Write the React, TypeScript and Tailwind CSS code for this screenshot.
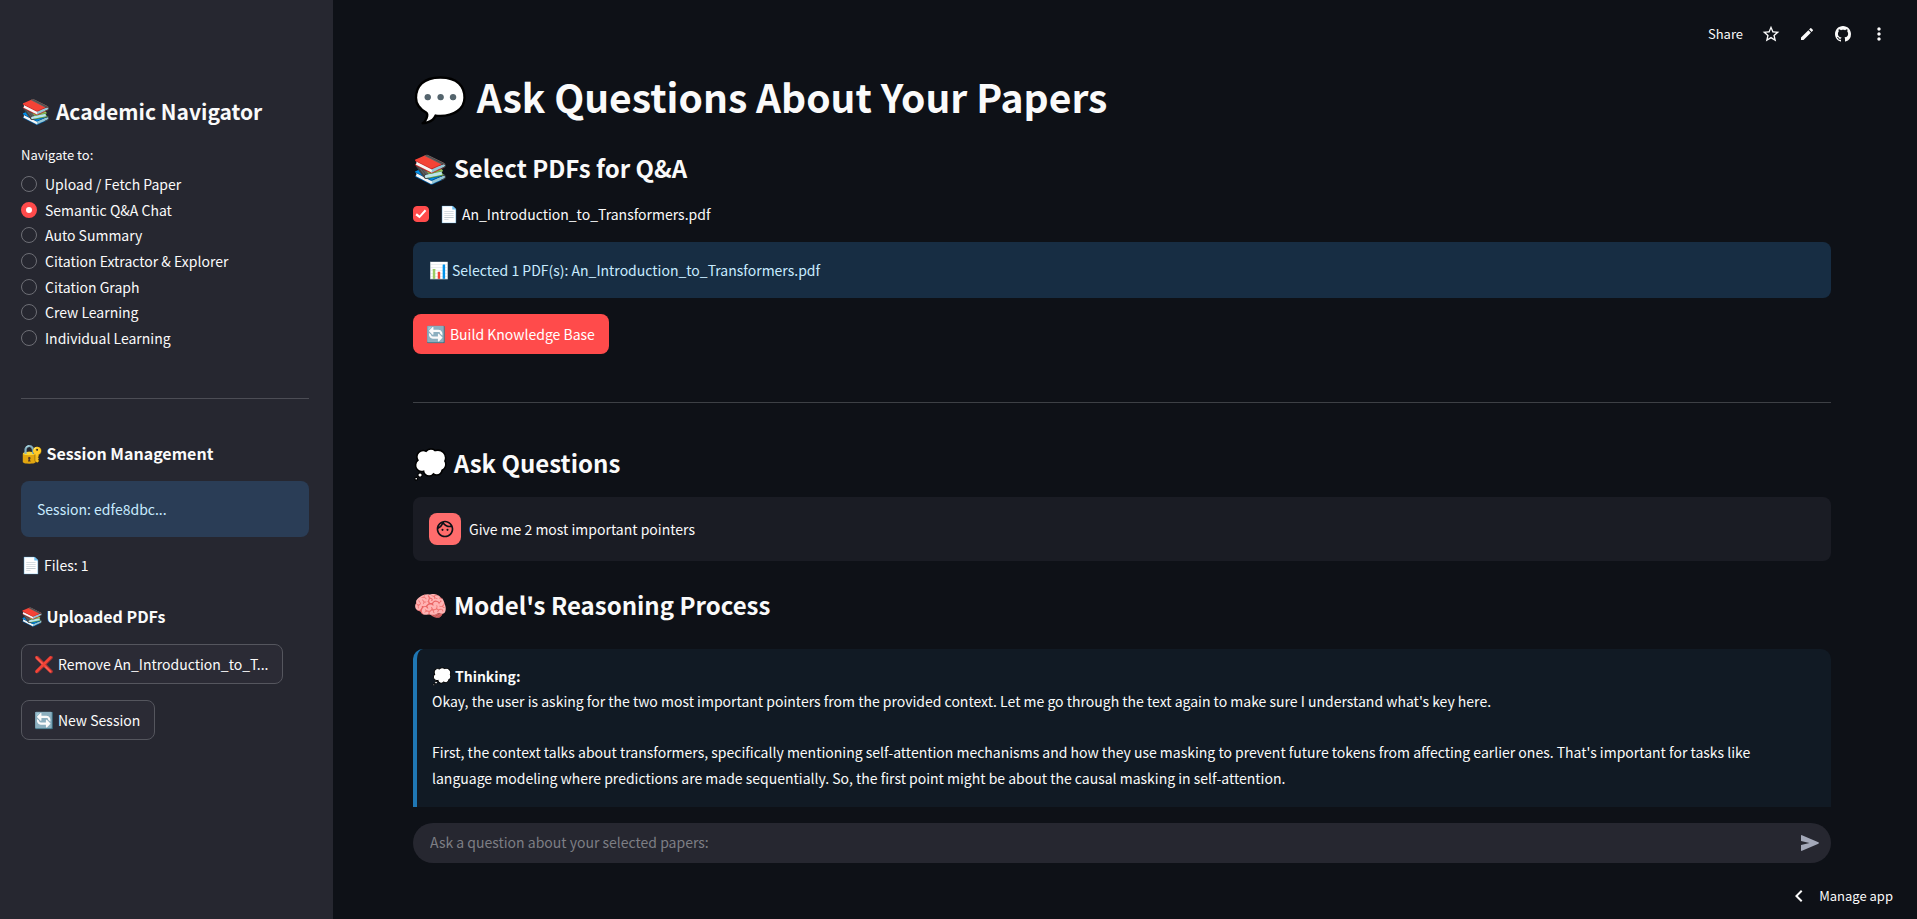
import { useState, type ReactNode } from "react";
import { MdChevronLeft, MdEdit, MdMoreVert, MdOutlineFace, MdStarBorder } from "react-icons/md";

const PAGES = [
  "Upload / Fetch Paper",
  "Semantic Q&A Chat",
  "Auto Summary",
  "Citation Extractor & Explorer",
  "Citation Graph",
  "Crew Learning",
  "Individual Learning",
];

const SECONDARY_BUTTON =
  "flex h-10 items-center gap-1 rounded-lg border border-[#55565e] bg-[#2b2b35] pr-3.5 pl-3";

function Emoji({ children, className = "text-base" }: { children: string; className?: string }) {
  return (
    <span aria-hidden="true" className={`shrink-0 pb-0.5 leading-none ${className}`}>
      {children}
    </span>
  );
}

function SectionHeading({ emoji, children }: { emoji: string; children: ReactNode }) {
  return (
    <h2 className="flex h-9 items-center gap-1.5 text-2xl font-semibold">
      <Emoji className="text-[28px]">{emoji}</Emoji>
      {children}
    </h2>
  );
}

function SidebarHeading({ emoji, children }: { emoji: string; children: ReactNode }) {
  return (
    <h3 className="flex h-6 items-center gap-[3px] text-base font-semibold">
      <Emoji className="text-lg">{emoji}</Emoji>
      {children}
    </h3>
  );
}

function Sidebar() {
  const [page, setPage] = useState(PAGES[1]);
  return (
    <aside className="w-[333px] shrink-0 overflow-hidden bg-[#262730] pt-[95px] pr-6 pl-[21px]">
      <h2 className="flex h-8 items-center gap-[5px] text-[21px] font-semibold">
        <Emoji className="text-2xl">📚</Emoji>
        Academic Navigator
      </h2>
      <fieldset className="mt-4">
        <legend className="h-6 text-[13px] leading-6">Navigate to:</legend>
        <div className="mt-[5px] flex h-[178px] flex-col justify-between">
          {PAGES.map((name) => (
            <label key={name} className="flex h-6 items-center gap-2">
              <input
                type="radio"
                name="page"
                checked={page === name}
                onChange={() => setPage(name)}
                className="size-4 shrink-0 appearance-none rounded-full border border-[#6d6e75] checked:border-[5px] checked:border-[#ff4b4b] checked:bg-white"
              />
              {name}
            </label>
          ))}
        </div>
      </fieldset>
      <hr className="mt-12 border-[#4c4d55]" />
      <div className="mt-[42px]">
        <SidebarHeading emoji="🔐">Session Management</SidebarHeading>
      </div>
      <div className="mt-4 flex h-14 items-center rounded-lg bg-[#2a3d56] px-4 text-[#c7ebff]">
        Session: edfe8dbc...
      </div>
      <p className="mt-4 flex h-6 items-center gap-[3px]">
        <Emoji>📄</Emoji>
        Files: 1
      </p>
      <div className="mt-[27px]">
        <SidebarHeading emoji="📚">Uploaded PDFs</SidebarHeading>
      </div>
      <div className="mt-4 flex flex-col items-start gap-4">
        <button type="button" className={SECONDARY_BUTTON}>
          <Emoji>❌</Emoji>
          Remove An_Introduction_to_T...
        </button>
        <button type="button" className={SECONDARY_BUTTON}>
          <Emoji>🔄</Emoji>
          New Session
        </button>
      </div>
    </aside>
  );
}

function Toolbar() {
  return (
    <header className="flex h-[60px] shrink-0 items-center justify-end gap-4 pt-2 pr-7">
      <button type="button" className="mr-0.5 text-[13px]">
        Share
      </button>
      <button type="button" aria-label="Favorite" className="grid size-5 place-items-center">
        <MdStarBorder className="size-5" />
      </button>
      <button type="button" aria-label="Edit source" className="grid size-5 place-items-center">
        <MdEdit className="size-4" />
      </button>
      <button type="button" aria-label="View on GitHub" className="grid size-5 place-items-center">
        <svg viewBox="0 0 16 16" className="size-4" fill="currentColor">
          <path d="M8 0C3.58 0 0 3.58 0 8c0 3.54 2.29 6.53 5.47 7.59.4.07.55-.17.55-.38 0-.19-.01-.82-.01-1.49-2.01.37-2.53-.49-2.69-.94-.09-.23-.48-.94-.82-1.13-.28-.15-.68-.52-.01-.53.63-.01 1.08.58 1.23.82.72 1.21 1.87.87 2.33.66.07-.52.28-.87.51-1.07-1.78-.2-3.64-.89-3.64-3.95 0-.87.31-1.59.82-2.15-.08-.2-.36-1.02.08-2.12 0 0 .67-.21 2.2.82.64-.18 1.32-.27 2-.27s1.36.09 2 .27c1.53-1.04 2.2-.82 2.2-.82.44 1.1.16 1.92.08 2.12.51.56.82 1.27.82 2.15 0 3.07-1.87 3.75-3.65 3.95.29.25.54.73.54 1.48 0 1.07-.01 1.93-.01 2.2 0 .21.15.46.55.38A8.01 8.01 0 0 0 16 8c0-4.42-3.58-8-8-8Z" />
        </svg>
      </button>
      <button type="button" aria-label="Main menu" className="grid size-5 place-items-center">
        <MdMoreVert className="size-5" />
      </button>
    </header>
  );
}

export default function App() {
  const [included, setIncluded] = useState(true);
  return (
    <div className="flex h-screen overflow-hidden bg-[#0e1117] font-['Noto_Sans_CJK_SC','Noto_Color_Emoji',sans-serif] text-sm text-[#fafafa]">
      <Sidebar />
      <div className="flex min-w-0 flex-1 flex-col">
        <Toolbar />
        <main className="min-h-0 flex-1 overflow-hidden pr-[86px] pl-20">
          <h1 className="flex h-[74px] items-center gap-[9px] text-[39px] font-bold">
            <Emoji className="text-[44px]">💬</Emoji>
            Ask Questions About Your Papers
          </h1>
          <div className="mt-4">
            <SectionHeading emoji="📚">Select PDFs for Q&amp;A</SectionHeading>
          </div>
          <label className="mt-4 flex h-6 items-center">
            <span className="mr-2.5 grid size-4 place-items-center">
              <input
                type="checkbox"
                checked={included}
                onChange={() => setIncluded(!included)}
                className="col-start-1 row-start-1 size-4 appearance-none rounded border border-[#6d6e75] checked:border-[#ff4b4b] checked:bg-[#ff4b4b]"
              />
              {included && (
                <svg viewBox="0 0 17 13" className="pointer-events-none col-start-1 row-start-1 h-2.5 w-3" fill="none">
                  <path
                    d="M6.50002 12.6L0.600025 8.40002L2.60002 5.60002L6.50002 8.60002L13.9 0L16 2.40002L6.50002 12.6Z"
                    fill="white"
                  />
                </svg>
              )}
            </span>
            <Emoji className="mr-[3px] text-base">📄</Emoji>
            An_Introduction_to_Transformers.pdf
          </label>
          <div className="mt-4 flex h-14 items-center gap-[3px] rounded-lg bg-[#172d43] px-4 text-[#c7ebff]">
            <Emoji>📊</Emoji>
            Selected 1 PDF(s): An_Introduction_to_Transformers.pdf
          </div>
          <button
            type="button"
            className="mt-4 flex h-10 items-center gap-1 rounded-lg bg-[#ff4b4b] pr-3.5 pl-[13px] text-white"
          >
            <Emoji>🔄</Emoji>
            Build Knowledge Base
          </button>
          <hr className="mt-12 border-[#3d4045]" />
          <div className="mt-[42px]">
            <SectionHeading emoji="💭">Ask Questions</SectionHeading>
          </div>
          <div className="mt-4 flex h-16 items-center gap-2 rounded-lg bg-[#1a1c24] px-4">
            <span className="grid size-8 place-items-center rounded-lg bg-[#ff6c6c] text-[#0e1117]">
              <MdOutlineFace className="size-5" />
            </span>
            Give me 2 most important pointers
          </div>
          <div className="mt-[26px]">
            <SectionHeading emoji="🧠">Model&apos;s Reasoning Process</SectionHeading>
          </div>
          <section className="mt-[26px] rounded-[10px] border-l-4 border-[#1f77b4] bg-[#111a24] pt-3.5 pr-12 pb-20 pl-[15px] leading-[26px]">
            <h3 className="flex h-[25px] items-center gap-[3px] font-bold">
              <Emoji>💭</Emoji>
              Thinking:
            </h3>
            <p>
              Okay, the user is asking for the two most important pointers from the provided context. Let me go
              through the text again to make sure I understand what&apos;s key here.
            </p>
            <p className="mt-[25px]">
              First, the context talks about transformers, specifically mentioning self-attention mechanisms and how
              they use masking to prevent future tokens from affecting earlier ones. That&apos;s important for tasks
              like language modeling where predictions are made sequentially. So, the first point might be about the
              causal masking in self-attention.
            </p>
          </section>
        </main>
        <form
          className="mt-4 mr-[86px] ml-20 flex h-10 shrink-0 items-center rounded-full bg-[#262730] pr-[11px] pl-[17px]"
          onSubmit={(e) => e.preventDefault()}
        >
          <input
            type="text"
            aria-label="Question"
            placeholder="Ask a question about your selected papers:"
            className="h-10 min-w-0 flex-1 bg-transparent pb-0.5 outline-none placeholder:text-[#7d7e84]"
          />
          <button type="submit" aria-label="Send" className="grid size-5 place-items-center text-[#a3a8b8]">
            <svg viewBox="0 0 18 16" className="h-4 w-[18px]" fill="currentColor">
              <path d="M0 0.8V6L8.5 8L0 10V15.2Q0 16.2 1 15.8L17.4 8.7Q18.4 8 17.4 7.3L1 0.2Q0 -0.2 0 0.8Z" />
            </svg>
          </button>
        </form>
        <footer className="flex h-14 shrink-0 items-center justify-end pt-2.5 pr-6">
          <button type="button" className="flex items-center gap-2 text-[13px]">
            <MdChevronLeft className="size-6" />
            Manage app
          </button>
        </footer>
      </div>
    </div>
  );
}
